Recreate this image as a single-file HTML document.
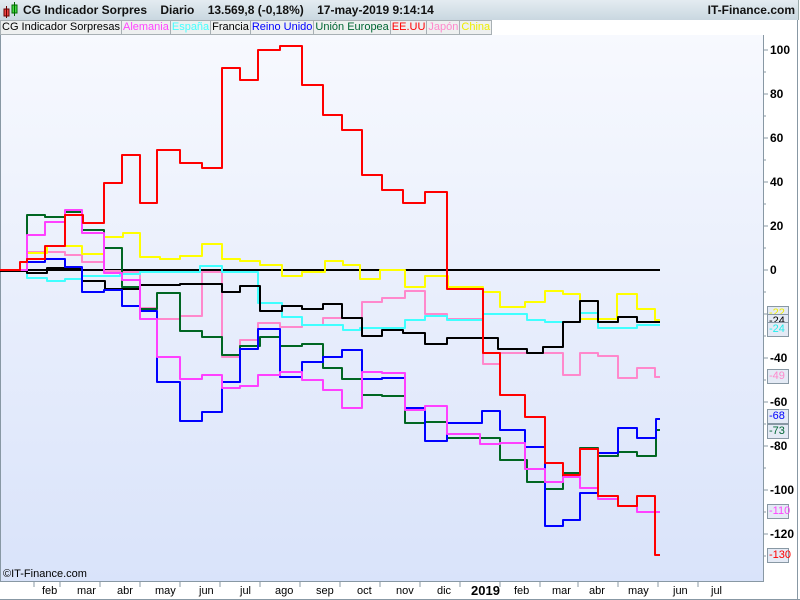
<!DOCTYPE html>
<html><head><meta charset="utf-8"><style>
body{margin:0;width:800px;height:600px;overflow:hidden;background:#fff;font-family:"Liberation Sans",sans-serif;position:relative}
#title{position:absolute;left:0;top:0;width:798px;height:20px;background:linear-gradient(#e4ecf1,#c9d7e0);border:1px solid #9aa;border-width:0 1px 0 0;font-size:12px;font-weight:bold;color:#111}
#tabs{position:absolute;left:0;top:20px;height:14px;font-size:11px;white-space:nowrap}
#tabs span{display:inline-block;height:13px;line-height:13px;padding:0 1px;background:#eef0f0;border:1px solid #a8b0b4;margin-right:-1px}
.lbl{position:absolute;left:767px;width:19px;height:13px;border:1px solid #8898a4;background:#e4eaf5;font-size:11px;line-height:13px;text-align:left;padding-left:1px}
.yt{position:absolute;left:770px;font-size:12px;font-weight:bold;color:#000}
.mt{position:absolute;top:585px;font-size:11px;color:#000}
</style></head><body>
<div id="title">
<svg style="position:absolute;left:3px;top:2px" width="16" height="16"><rect x="1" y="7" width="5" height="7" fill="#e44" stroke="#600" stroke-width="1"/><line x1="3.5" y1="4" x2="3.5" y2="16" stroke="#600"/><rect x="9" y="3" width="5" height="8" fill="#4d4" stroke="#060"/><line x1="11.5" y1="0" x2="11.5" y2="14" stroke="#060"/></svg>
<span style="position:absolute;left:23px;top:3px;word-spacing:0">CG Indicador Sorpres &nbsp;&nbsp; Diario &nbsp;&nbsp; 13.569,8 (-0,18%) &nbsp;&nbsp; 17-may-2019 9:14:14</span>
<span style="position:absolute;right:3px;top:3px">IT-Finance.com</span>
</div>
<div id="tabs"><span>CG Indicador Sorpresas</span><span style="color:#f4f">Alemania</span><span style="color:#4ff">España</span><span>Francia</span><span style="color:#00f">Reino Unido</span><span style="color:#063">Unión Europea</span><span style="color:#f00">EE.UU</span><span style="color:#f8c">Japón</span><span style="color:#ee0">China</span></div>
<div style="position:absolute;left:0;top:35px;width:762px;height:546px;background:linear-gradient(#f7f9fe,#d9e3fa);border-left:1px solid #8898a4;border-right:1px solid #8898a4;border-bottom:1px solid #8898a4"></div>
<div style="position:absolute;left:797px;top:20px;width:1px;height:580px;background:#8898a4"></div>
<div style="position:absolute;left:0;top:599px;width:800px;height:1px;background:#8898a4"></div>
<div style="position:absolute;left:3px;top:568px;font-size:11px">©IT-Finance.com</div>
<svg style="position:absolute;left:0;top:0" width="800" height="600" fill="none" stroke-width="2" stroke-linejoin="round">
<g stroke="#8898a4" stroke-width="1">
<path d="M763 50h5M763 94h5M763 138h5M763 182h5M763 226h5M763 270h5M763 314h5M763 358h5M763 402h5M763 446h5M763 490h5M763 534h5M763 72h3M763 116h3M763 160h3M763 204h3M763 248h3M763 292h3M763 336h3M763 380h3M763 424h3M763 468h3M763 512h3M763 556h3"/>
<path d="M34 582v5M60 582v5M100 582v5M140 582v5M180 582v5M220 582v5M260 582v5M300 582v5M340 582v5M380 582v5M420 582v5M460 582v5M500 582v5M540 582v5M578 582v5M618 582v5M658 582v5M698 582v5"/>
</g>
<path stroke="#000" d="M0 270H660"/>
<path stroke="#ffb000" d="M0 270H27"/>
<path stroke="#ff88cc" d="M0 270H27V252H65V255H82V262H104V271H122V272H140V308H157V319H180V316H202V272H222V357H240V340H258V323H280V327H302V325H323V318H342V318H362V302H382V298H405V291H425V314H447V319H483V364H500V353H563V375H580V353H598V356H618V378H637V368H655V377H660"/>
<path stroke="#40ffff" d="M0 270H27V278H47V281H65V279H82V276H120V274H140V272H200V266H222V272H258V303H282V317H302V325H343V330H360V328H405V320H425V316H447V320H483V314H527V320H545V322H580V313H598V328H637V325H660"/>
<path stroke="#ffff00" d="M0 270H27V253H47V246H82V254H104V237H123V233H140V257H160V259H180V256H202V244H222V259H240V261H260V265H282V276H302V272H325V261H343V265H360V279H380V270H405V287H425V276H448V287H483V292H500V307H525V302H545V291H563V294H580V319H617V294H637V309H655V320H660"/>
<path stroke="#000" d="M0 271H27V273H47V268H82V281H105V289H140V285H180V284H222V292H240V286H260V311H282V306H302V309H323V304H342V318H362V336H382V330H403V333H425V344H447V338H498V349H527V353H543V347H563V322H580V301H598V322H618V317H637V322H660"/>
<path stroke="#006622" d="M0 270H27V215H45V217H65V212H82V230H104V248H122V287H140V309H157V293H180V331H202V337H222V355H240V346H260V337H280V346H302V344H323V368H342V379H362V395H382V396H405V423H425V422H447V438H500V460H527V482H545V489H563V473H580V448H598V456H618V452H637V456H656V430H660"/>
<path stroke="#0000ff" d="M0 270H27V262H45V259H65V267H82V292H104V290H122V306H140V311H157V382H180V421H202V412H222V382H240V349H258V329H280V377H302V362H323V357H342V350H362V379H382V378H405V408H425V441H447V423H482V411H500V430H525V447H545V526H563V520H580V493H598V453H618V428H637V438H656V419H660"/>
<path stroke="#ff40ff" d="M0 270H27V235H45V222H65V210H82V233H104V273H122V280H140V319H157V357H180V379H202V375H222V388H240V386H258V375H280V372H302V380H323V390H342V408H362V372H382V373H405V410H425V406H447V434H480V444H500V443H525V469H545V482H563V477H580V488H598V499H618V506H637V512H660"/>
<path stroke="#ff0000" d="M0 270H20V262H27V259H45V246H65V215H83V223H104V183H122V155H140V203H157V150H180V163H202V168H222V68H240V80H258V50H280V46H302V85H323V115H342V130H362V175H382V190H403V203H425V192H447V289H483V353H500V395H525V417H545V463H563V475H580V449H598V496H618V506H637V496H655V555H660"/>
</svg>
<div class="yt" style="top:43px">100</div><div class="yt" style="top:87px">80</div><div class="yt" style="top:131px">60</div><div class="yt" style="top:175px">40</div><div class="yt" style="top:219px">20</div><div class="yt" style="top:263px">0</div><div class="yt" style="top:351px">-40</div><div class="yt" style="top:395px">-60</div><div class="yt" style="top:439px">-80</div><div class="yt" style="top:483px">-100</div><div class="yt" style="top:527px">-120</div>
<div class="lbl" style="top:306px;color:#ee0">-22</div>
<div class="lbl" style="top:314px;color:#000">-24</div>
<div class="lbl" style="top:322px;color:#2ee">-24</div>
<div class="lbl" style="top:369px;color:#f8c">-49</div>
<div class="lbl" style="top:409px;color:#00f">-68</div>
<div class="lbl" style="top:424px;color:#063">-73</div>
<div class="lbl" style="top:504px;color:#f4f">-110</div>
<div class="lbl" style="top:548px;color:#f00">-130</div>
<div class="mt" style="left:42px">feb</div><div class="mt" style="left:77px">mar</div><div class="mt" style="left:117px">abr</div><div class="mt" style="left:155px">may</div><div class="mt" style="left:199px">jun</div><div class="mt" style="left:240px">jul</div><div class="mt" style="left:275px">ago</div><div class="mt" style="left:316px">sep</div><div class="mt" style="left:357px">oct</div><div class="mt" style="left:396px">nov</div><div class="mt" style="left:437px">dic</div><div class="mt" style="left:471px;font-weight:bold;font-size:13px;top:583px">2019</div><div class="mt" style="left:514px">feb</div><div class="mt" style="left:552px">mar</div><div class="mt" style="left:589px">abr</div><div class="mt" style="left:628px">may</div><div class="mt" style="left:673px">jun</div><div class="mt" style="left:711px">jul</div>
</body></html>
